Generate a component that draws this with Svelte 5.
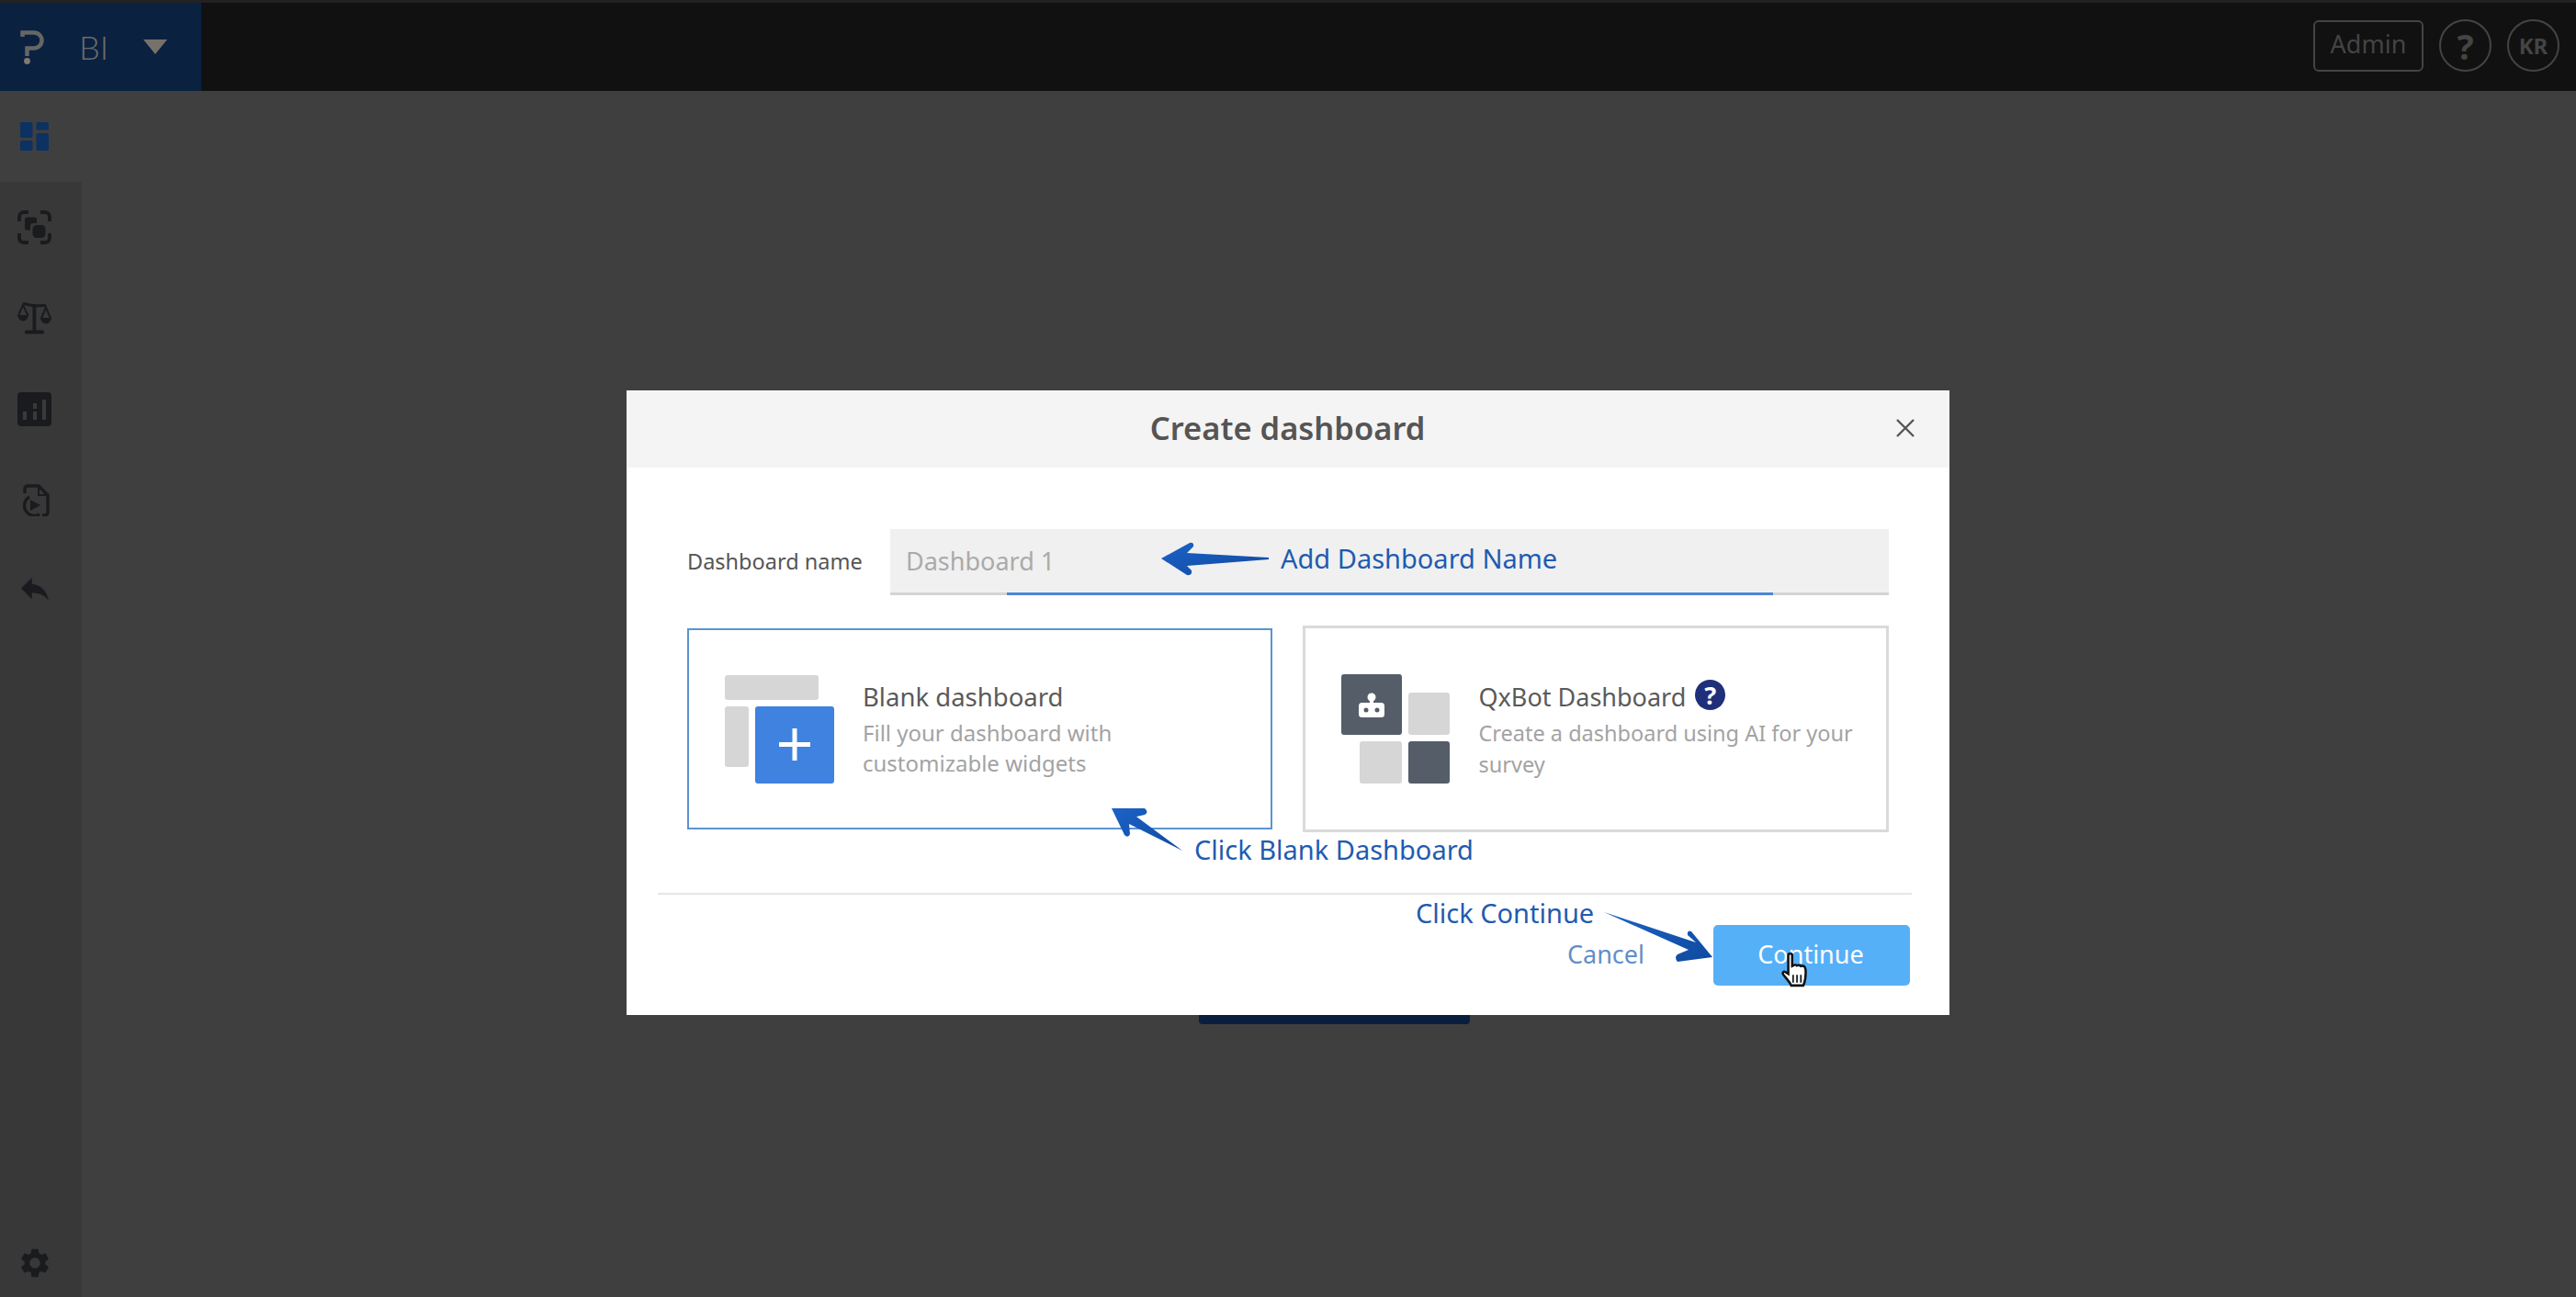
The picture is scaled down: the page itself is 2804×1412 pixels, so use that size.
<script>
    let name = $state('');

    const navItems = ['dashboard', 'focus', 'scale', 'chart', 'doc', 'reply'];
</script>

<div class="page">
    <header class="topbar">
        <div class="brand">
            <svg class="logo" width="28" height="40" viewBox="0 0 28 40">
                <path d="M2.500 9V4.500H15a8.500 8.500 0 0 1 0 17H7.500V30" fill="none" stroke="#666" stroke-width="4.500" />
                <circle cx="7.500" cy="35.500" r="3.400" fill="#807a70" />
            </svg>
            <span class="brand-name">BI</span>
            <svg class="caret" width="26" height="16" viewBox="0 0 26 16"><path d="M0 0h26L13 16z" fill="#77716a" /></svg>
        </div>
        <div class="top-actions">
            <button class="admin">Admin</button>
            <span class="round help">?</span>
            <span class="round kr">KR</span>
        </div>
    </header>

    <div class="main">
        <nav class="sidebar">
            {#each navItems as item, i}
                <div class="nav-item" class:active={i === 0} class:reply={item === 'reply'}>
                    {#if item === 'dashboard'}
                        <svg width="31" height="31" viewBox="0 0 31 31" fill="#0c3163">
                            <rect x="0" y="0" width="13.500" height="17" rx="2" />
                            <rect x="0" y="20" width="13.500" height="11" rx="2" />
                            <rect x="17.500" y="0" width="13.500" height="8.500" rx="2" />
                            <rect x="17.500" y="12" width="13.500" height="19" rx="2" />
                        </svg>
                    {:else if item === 'focus'}
                        <svg width="37" height="37" viewBox="0 0 37 37" fill="none" stroke="#1a1b1e" stroke-width="3.800">
                            <path d="M12 2H7a5 5 0 0 0-5 5v5M25 2h5a5 5 0 0 1 5 5v5M12 35H7a5 5 0 0 1-5-5v-5M25 35h5a5 5 0 0 0 5-5v-5" />
                            <path d="M8 10a2.500 2.500 0 0 1 2.500-2.500h8a2.500 2.500 0 0 1 2.500 2.500v4h-4a3 3 0 0 0-3 3v4.500h-3.500a2.500 2.500 0 0 1-2.500-2.500z" fill="#1a1b1e" stroke="none" />
                            <rect x="16.500" y="16" width="14" height="14" rx="4.500" fill="#1a1b1e" stroke="none" />
                        </svg>
                    {:else if item === 'scale'}
                        <svg width="37" height="35" viewBox="0 0 37 35" fill="#1a1b1e">
                            <path d="M6 1.500l12 2.500 13-.5" fill="none" stroke="#1a1b1e" stroke-width="3" />
                            <rect x="16.500" y="2" width="3.800" height="30" />
                            <rect x="8" y="30.500" width="21" height="4" rx="1.500" />
                            <path d="M0 14h12a6 6.500 0 0 1-12 0zM25 17h12a6 6.500 0 0 1-12 0z" />
                            <path d="M1 14.500L6 3l5.500 11.500M26 17.500l5-12 5 12" fill="none" stroke="#1a1b1e" stroke-width="2" />
                        </svg>
                    {:else if item === 'chart'}
                        <svg width="37" height="37" viewBox="0 0 37 37">
                            <rect width="37" height="37" rx="4" fill="#1a1b1e" />
                            <path d="M6 21h4v9H6zM17 12h4v6h-4zM17 21h4v9h-4zM27 8h4v22h-4z" fill="#3a3a3a" />
                        </svg>
                    {:else if item === 'doc'}
                        <svg width="32" height="35" viewBox="0 0 32 35" fill="none" stroke="#1a1b1e" stroke-width="3.400">
                            <path d="M5 10V5a3 3 0 0 1 3-3h12l10 10v19a3 3 0 0 1-3 3h-3" />
                            <path d="M20 2v10h10" stroke-width="2" />
                            <path d="M10 14a9.500 9.500 0 1 0 11 19" />
                            <path d="M11 17l11 6-11 6z" fill="#1a1b1e" stroke="none" />
                        </svg>
                    {:else}
                        <svg width="30" height="24" viewBox="3 5 18 14.500" preserveAspectRatio="none"><path d="M10 9V5l-7 7 7 7v-4.100c5 0 8.500 1.600 11 5.100-1-5-4-10-11-11z" fill="#1a1b1e" /></svg>
                    {/if}
                </div>
            {/each}
            <div class="nav-gear">
                <svg width="38" height="38" viewBox="0 0 24 24"><path fill="#1a1b1e" d="M19.14 12.94c.04-.3.06-.61.06-.94 0-.32-.02-.64-.07-.94l2.03-1.58a.49.49 0 0 0 .12-.61l-1.92-3.32a.488.488 0 0 0-.59-.22l-2.39.96c-.5-.38-1.03-.7-1.62-.94l-.36-2.54a.484.484 0 0 0-.48-.41h-3.84c-.24 0-.43.17-.47.41l-.36 2.54c-.59.24-1.13.57-1.62.94l-2.39-.96c-.22-.08-.47 0-.59.22L2.74 8.87c-.12.21-.08.47.12.61l2.03 1.58c-.05.3-.09.63-.09.94s.02.64.07.94l-2.03 1.58a.49.49 0 0 0-.12.61l1.92 3.32c.12.22.37.29.59.22l2.39-.96c.5.38 1.03.7 1.62.94l.36 2.54c.05.24.24.41.48.41h3.84c.24 0 .44-.17.47-.41l.36-2.54c.59-.24 1.13-.56 1.62-.94l2.39.96c.22.08.47 0 .59-.22l1.92-3.32c.12-.22.07-.47-.12-.61l-2.01-1.58zM12 15.600c-1.98 0-3.6-1.62-3.6-3.6s1.62-3.6 3.6-3.6 3.6 1.62 3.6 3.6-1.62 3.6-3.6 3.6z" /></svg>
            </div>
        </nav>
    </div>

    <!-- the page's own button, mostly hidden by the dialog -->
    <div class="behind-btn"></div>

    <div class="backdrop">
        <div class="modal">
            <div class="modal-head">
                <h2>Create dashboard</h2>
                <svg class="close" width="20" height="20" viewBox="0 0 20 20"><path d="M1 1l18 18M19 1L1 19" stroke="#555" stroke-width="2.400" /></svg>
            </div>
            <div class="modal-body">
                <div class="name-row">
                    <label for="dash-name">Dashboard name</label>
                    <div class="name-input">
                        <input id="dash-name" placeholder="Dashboard 1" bind:value={name} />
                        <span class="focus-line"></span>
                    </div>
                </div>
                <div class="cards">
                    <div class="card selected">
                        <div class="art blank-art">
                            <span class="g top"></span>
                            <span class="g side"></span>
                            <span class="plus-box">
                                <svg width="34" height="35" viewBox="0 0 34 35"><path d="M14.500 0h5v15H34v5H19.500v15h-5V20H0v-5h14.500z" fill="#fff" /></svg>
                            </span>
                        </div>
                        <div class="card-text">
                            <div class="card-title">Blank dashboard</div>
                            <div class="card-desc">Fill your dashboard with<br />customizable widgets</div>
                        </div>
                    </div>
                    <div class="card">
                        <div class="art bot-art">
                            <span class="d big">
                                <svg width="28" height="27" viewBox="0 0 28 27">
                                    <circle cx="14" cy="5" r="4.500" fill="#fff" />
                                    <rect x="12" y="7" width="4" height="6" fill="#fff" />
                                    <rect x="0" y="11" width="28" height="16" rx="3.500" fill="#fff" />
                                    <circle cx="8" cy="19" r="2.500" fill="#555d68" />
                                    <circle cx="20" cy="19" r="2.500" fill="#555d68" />
                                </svg>
                            </span>
                            <span class="g tr"></span>
                            <span class="g bl"></span>
                            <span class="d br"></span>
                        </div>
                        <div class="card-text qx-text">
                            <div class="card-title">QxBot Dashboard <span class="qmark">?</span></div>
                            <div class="card-desc">Create a dashboard using AI for your<br />survey</div>
                        </div>
                    </div>
                </div>
                <div class="modal-foot">
                    <a class="cancel" href="#cancel">Cancel</a>
                    <button class="continue">Continue</button>
                </div>
            </div>
        </div>
    </div>

    <!-- tutorial annotations drawn on top of the screenshot -->
    <svg class="arrows" width="2804" height="1412" viewBox="0 0 2804 1412">
        <defs>
            <linearGradient id="arrow-fill" x1="0" y1="0" x2="1" y2="1">
                <stop offset="0" stop-color="#1c62c8" />
                <stop offset="1" stop-color="#0f4a9e" />
            </linearGradient>
        </defs>
        <path fill="url(#arrow-fill)" d="M1264 608L1295 591Q1300 590 1299 595L1292 602L1381 607V609L1292 616L1297 621Q1298 627 1292 626Z" />
        <path fill="url(#arrow-fill)" d="M1210 880L1246 880Q1251 884 1246 887L1237 889L1287 926L1229 897L1230 908Q1228 913 1224 909Z" />
        <path fill="url(#arrow-fill)" d="M1864 1042L1826 1047Q1822 1042 1826 1039L1838 1034L1746 993L1846 1026L1837 1018Q1836 1012 1841 1014Z" />
    </svg>
    <span class="note note-name">Add Dashboard Name</span>
    <span class="note note-blank">Click Blank Dashboard</span>
    <span class="note note-continue">Click Continue</span>

    <svg class="hand" width="32" height="38" viewBox="0 0 30 36">
        <path d="M7 2.500c0-2 4-2 4 0V14l1-.5c1-1 3-1 4 0 1-.6 3-.6 4 .5 1-.5 3-.3 4 1 1 1.500 1 8 .5 12-.4 3-1 5-2 7H10c-1-3-4-6-8-11-1.500-2 0-4 2-3l3 2z" fill="#fff" stroke="#111" stroke-width="2.400" />
        <path d="M12 23v8M16 23v8M20 23v8" stroke="#111" stroke-width="1.600" />
    </svg>
</div>

<style>
    :global(body) {
        margin: 0;
        background: #3f3f3f;
    }
    .page {
        position: relative;
        height: 1412px;
        overflow: hidden;
        background: #3f3f3f;
        display: flex;
        flex-direction: column;
        font-family: "Noto Sans", sans-serif;
    }
    .topbar {
        flex: none;
        height: 96px;
        display: flex;
        justify-content: space-between;
        background: #111;
        border-top: 3px solid #222;
    }
    .brand {
        width: 219px;
        background: #0a2240;
        display: flex;
        align-items: center;
        padding-left: 22px;
        box-sizing: border-box;
    }
    .brand-name {
        margin-left: 36px;
        font: 300 36px "Lato", sans-serif;
        color: #6c6c6c;
    }
    .caret {
        margin-left: 38px;
    }
    .top-actions {
        display: flex;
        align-items: center;
        gap: 17px;
        padding-right: 18px;
        padding-bottom: 3px;
    }
    .admin {
        width: 120px;
        height: 56px;
        border: 2px solid #444;
        border-radius: 6px;
        background: none;
        color: #444;
        font: 27px/46px "Noto Sans", sans-serif;
        padding: 0 0 4px;
    }
    .round {
        width: 57px;
        height: 57px;
        box-sizing: border-box;
        border: 2px solid #444;
        border-radius: 50%;
        display: flex;
        align-items: center;
        justify-content: center;
        color: #444;
        font-weight: 700;
    }
    .help {
        font-size: 38px;
    }
    .kr {
        font-size: 24px;
    }
    .main {
        flex: 1;
        display: flex;
        min-height: 0;
    }
    .sidebar {
        width: 89px;
        display: flex;
        flex-direction: column;
        background: #383838;
    }
    .nav-item {
        height: 99px;
        box-sizing: border-box;
        padding-right: 14px;
        display: flex;
        align-items: center;
        justify-content: center;
    }
    .nav-item.active {
        background: #3f3f3f;
    }
    .nav-item.reply {
        padding-bottom: 6px;
    }
    .nav-gear {
        margin-top: auto;
        height: 74px;
        padding-right: 14px;
        display: flex;
        align-items: center;
        justify-content: center;
    }
    .behind-btn {
        position: absolute;
        left: 1305px;
        top: 1060px;
        width: 295px;
        height: 55px;
        border-radius: 4px;
        background: #0a1f3d;
    }
    .backdrop {
        position: absolute;
        inset: 0;
        display: flex;
        justify-content: center;
        align-items: flex-start;
        padding: 425px 1px 0 0;
        box-sizing: border-box;
    }
    .modal {
        width: 1440px;
        height: 680px;
        background: #fff;
        display: flex;
        flex-direction: column;
    }
    .modal-head {
        height: 84px;
        flex: none;
        background: #f4f4f4;
        display: flex;
        align-items: center;
        justify-content: center;
        position: relative;
    }
    .modal-head h2 {
        margin: 0 0 3px;
        font-size: 34.500px;
        font-weight: 600;
        color: #555;
    }
    .close {
        position: absolute;
        right: 38px;
        top: 31px;
    }
    .modal-body {
        flex: 1;
        padding: 67px 66px 32px 66.500px;
        display: flex;
        flex-direction: column;
    }
    .name-row {
        display: flex;
        align-items: center;
    }
    .name-row label {
        width: 221px;
        flex: none;
        margin-bottom: 2px;
        font-size: 23.500px;
        color: #555;
    }
    .name-input {
        position: relative;
        width: 1087px;
        height: 72px;
        background: #f0f0f0;
        border-bottom: 3px solid #d4d4d4;
        box-sizing: border-box;
    }
    .name-input input {
        width: 100%;
        height: 100%;
        box-sizing: border-box;
        border: 0;
        outline: 0;
        background: none;
        padding: 0 0 0 17px;
        font: 27px "Noto Sans", sans-serif;
    }
    .name-input input::placeholder {
        color: #aaa;
    }
    .focus-line {
        position: absolute;
        left: 127px;
        width: 834px;
        bottom: -3px;
        height: 3px;
        background: #4a86d8;
    }
    .cards {
        display: flex;
        justify-content: space-between;
        align-items: center;
        margin-top: 33px;
    }
    .card {
        width: 638px;
        height: 225px;
        box-sizing: border-box;
        border: 3px solid #dadada;
        display: flex;
        align-items: center;
    }
    .card.selected {
        width: 637px;
        height: 219px;
        border: 2px solid #5b93d0;
    }
    .art {
        position: relative;
        flex: none;
    }
    .blank-art {
        width: 119px;
        height: 118px;
        margin: 0 31px 0 39px;
    }
    .bot-art {
        width: 118px;
        height: 119px;
        margin: 0 32px 0 39px;
    }
    .art span {
        position: absolute;
        border-radius: 3px;
    }
    .g {
        background: #d6d6d6;
    }
    .d {
        background: #555d68;
    }
    .top {
        left: 0;
        top: 0;
        width: 102px;
        height: 27px;
    }
    .side {
        left: 0;
        top: 34px;
        width: 26px;
        height: 66px;
    }
    .plus-box {
        left: 33px;
        top: 34px;
        width: 86px;
        height: 84px;
        background: #3f82df;
        display: flex;
        align-items: center;
        justify-content: center;
    }
    .big {
        left: 0;
        top: 0;
        width: 66px;
        height: 66px;
        display: flex;
        align-items: center;
        justify-content: center;
    }
    .tr {
        left: 73px;
        top: 20px;
        width: 45px;
        height: 46px;
    }
    .bl {
        left: 20px;
        top: 73px;
        width: 46px;
        height: 46px;
    }
    .br {
        left: 73px;
        top: 73px;
        width: 45px;
        height: 46px;
    }
    .card-title {
        font-size: 27.500px;
        color: #5a5a5a;
        display: flex;
        align-items: center;
        gap: 10px;
        line-height: 36px;
    }
    .card-desc {
        font-size: 24px;
        line-height: 33px;
        color: #a3a3a3;
        margin-top: 4px;
    }
    .qx-text {
        padding-top: 3px;
    }
    .qx-text .card-title {
        font-size: 27px;
    }
    .qx-text .card-desc {
        font-size: 23.500px;
        line-height: 34px;
        margin-top: 4px;
    }
    .qmark {
        width: 33px;
        height: 33px;
        margin-top: -5px;
        border-radius: 50%;
        background: #1f2f7a;
        color: #fff;
        font-size: 27px;
        font-weight: 700;
        display: flex;
        align-items: center;
        justify-content: center;
    }
    .modal-foot {
        margin-top: auto;
        border-top: 2px solid #e6e6e6;
        margin-left: -32px;
        margin-right: -25px;
        padding: 33px 1.500px 0 0;
        display: flex;
        justify-content: flex-end;
        align-items: center;
        gap: 75px;
    }
    .cancel {
        margin-bottom: 3px;
        color: #5f8fca;
        font-size: 27px;
        text-decoration: none;
    }
    .continue {
        width: 214px;
        height: 66px;
        border: 0;
        border-radius: 5px;
        background: #56b0f8;
        color: #fff;
        font: 27px "Noto Sans", sans-serif;
        padding: 0 2px 3px 0;
    }
    .arrows {
        position: absolute;
        left: 0;
        top: 0;
        pointer-events: none;
    }
    .note {
        position: absolute;
        color: #1f5bb0;
        font: 29px/40px "Noto Sans", sans-serif;
        white-space: nowrap;
    }
    .note-name {
        left: 1394px;
        top: 588px;
    }
    .note-blank {
        left: 1300px;
        top: 905px;
    }
    .note-continue {
        left: 1541px;
        top: 974px;
    }
    .hand {
        position: absolute;
        left: 1939px;
        top: 1037px;
    }
</style>
